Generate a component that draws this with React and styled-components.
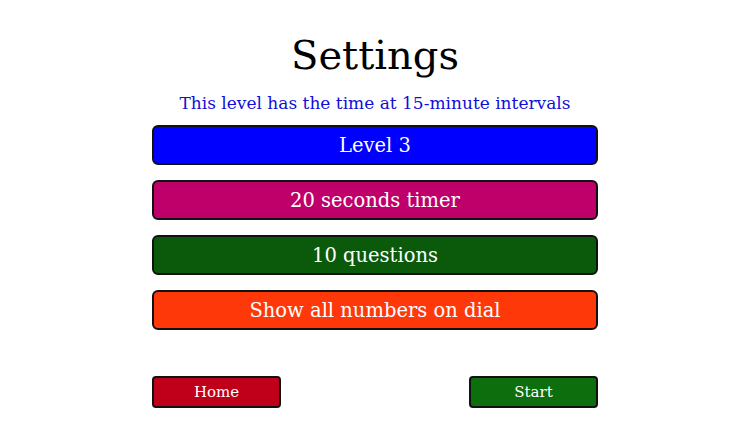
import React from 'react';
import styled, { createGlobalStyle } from 'styled-components';

const GlobalStyle = createGlobalStyle`
  html, body {
    margin: 0;
    padding: 0;
    background: #ffffff;
  }
  body {
    font-family: "DejaVu Serif", "Liberation Serif", serif;
  }
`;

const Page = styled.div`
  width: 750px;
  height: 422px;
  display: flex;
  flex-direction: column;
  align-items: center;
  box-sizing: border-box;
  padding-top: 30px;
`;

const Title = styled.h1`
  margin: 0;
  font-weight: normal;
  font-size: 40px;
  line-height: 50px;
  color: #000;
`;

const Subtitle = styled.p`
  margin: 12px 0 0;
  font-size: 17px;
  line-height: 22px;
  color: #1010d8;
`;

const Options = styled.div`
  margin-top: 11px;
  width: 446px;
  display: flex;
  flex-direction: column;
  gap: 15px;
`;

const OptionButton = styled.button`
  height: 40px;
  width: 100%;
  box-sizing: border-box;
  border: 2px solid #111;
  border-radius: 6px;
  background: ${p => p.$bg};
  color: #fff;
  font-family: inherit;
  font-size: 19.5px;
  padding: 0;
  cursor: pointer;
`;

const Footer = styled.div`
  margin-top: 46px;
  width: 446px;
  display: flex;
  justify-content: space-between;
`;

const NavButton = styled.button`
  width: 129px;
  height: 32px;
  box-sizing: border-box;
  border: 2px solid #111;
  border-radius: 4px;
  background: ${p => p.$bg};
  color: #fff;
  font-family: inherit;
  font-size: 15px;
  padding: 0;
  cursor: pointer;
`;

const options = [
  { label: 'Level 3', bg: '#0000ff' },
  { label: '20 seconds timer', bg: '#bf006a' },
  { label: '10 questions', bg: '#0b590b' },
  { label: 'Show all numbers on dial', bg: '#ff380a' },
];

export default function App() {
  return (
    <>
      <GlobalStyle />
      <Page>
        <Title>Settings</Title>
        <Subtitle>This level has the time at 15-minute intervals</Subtitle>
        <Options>
          {options.map(o => (
            <OptionButton key={o.label} $bg={o.bg}>{o.label}</OptionButton>
          ))}
        </Options>
        <Footer>
          <NavButton $bg="#c0001a">Home</NavButton>
          <NavButton $bg="#0d6e0d">Start</NavButton>
        </Footer>
      </Page>
    </>
  );
}
